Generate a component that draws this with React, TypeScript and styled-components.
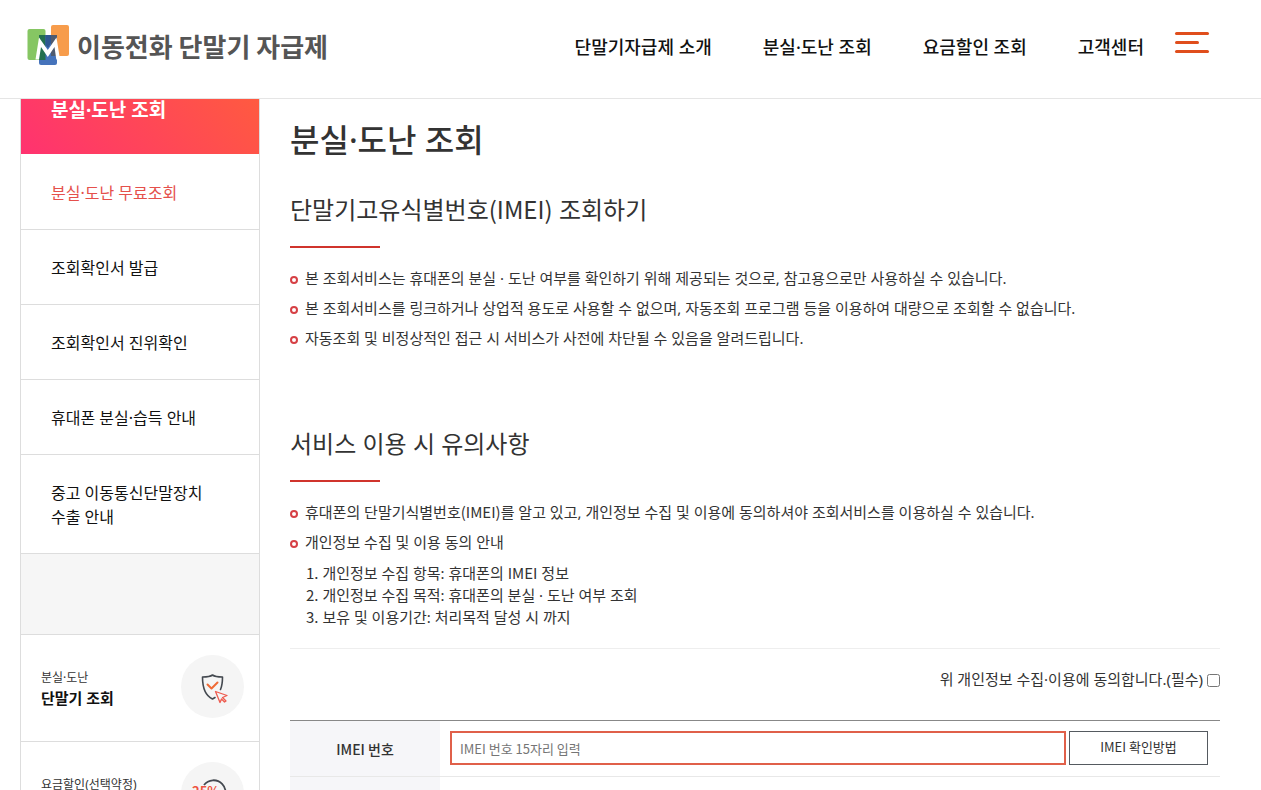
import React from "react";
import styled, { createGlobalStyle } from "styled-components";

const cjk = `"Noto Sans CJK KR", "Noto Sans", sans-serif`;

const GlobalStyle = createGlobalStyle`
  *, *::before, *::after { box-sizing: border-box; }
  body {
    margin: 0;
    background: #fff;
    color: #333;
    font-family: "Noto Sans", "Noto Sans CJK KR", sans-serif;
    font-size: 15px;
    line-height: 24px;
  }
  h1, h2, p, ul, ol { margin: 0; padding: 0; }
  ul, ol { list-style: none; }
  a { color: inherit; text-decoration: none; }
  button, input { font: inherit; }
`;

const Page = styled.div`
  display: flex;
  flex-direction: column;
  height: 100vh;
  overflow: hidden;
`;

const Latin = styled.span`
  font-family: ${cjk};
  line-height: 1;
`;

const Header = styled.header`
  display: flex;
  align-items: center;
  flex: none;
  height: 99px;
  padding: 0 52px 6px 27px;
  border-bottom: 1px solid #e5e5e5;
`;

const Logo = styled.a`
  display: flex;
  align-items: center;
  gap: 7px;
  color: #555;
  font-family: ${cjk};
  font-size: 26px;
  font-weight: 700;
  line-height: 40px;
  white-space: nowrap;
  svg { display: block; flex: none; }
`;

const Nav = styled.nav`
  display: flex;
  gap: 51px;
  margin-left: auto;
  padding-top: 2px;
  color: #111;
  font-size: 18px;
  font-weight: 500;
  white-space: nowrap;
`;

const MenuButton = styled.button`
  display: flex;
  flex-direction: column;
  gap: 6px;
  width: 34px;
  margin: 0 0 8px 31px;
  padding: 0;
  border: 0;
  background: none;
`;

const MenuBar = styled.span<{ $short?: boolean }>`
  width: ${(p) => (p.$short ? "24px" : "34px")};
  height: 3px;
  border-radius: 2px;
  background: #e04e1c;
`;

const Body = styled.div`
  display: flex;
  gap: 30px;
  flex: 1;
  min-height: 0;
  padding: 0 41px 0 20px;
`;

const Sidebar = styled.aside`
  flex: none;
  width: 240px;
  border: 1px solid #ddd;
  border-width: 0 1px;
`;

const SideTitle = styled.p`
  height: 55px;
  margin-bottom: 1px;
  padding: 0 30px;
  background: linear-gradient(50deg, #ff3270, #ff5a40);
  color: #fff;
  font-size: 19px;
  font-weight: 700;
  line-height: 22px;
`;

const SideLink = styled.a<{ $active?: boolean }>`
  display: block;
  padding: 26px 30px 24px;
  border-bottom: 1px solid #ddd;
  color: ${(p) => (p.$active ? "#e5504b" : "#111")};
  font-size: 16px;
`;

const SideGap = styled.div`
  height: 81px;
  border-bottom: 1px solid #ddd;
  background: #f6f6f6;
`;

const QuickLink = styled.a`
  display: flex;
  align-items: center;
  justify-content: space-between;
  height: 107px;
  padding: 0 15px 4px 20px;
  border-bottom: 1px solid #ddd;
  color: #333;
  font-size: 12px;
  line-height: 20px;
  span { padding-top: 3px; }
  strong { display: block; color: #111; font-size: 15px; font-weight: 700; }
  svg { display: block; flex: none; }
`;

const Main = styled.main`
  flex: 1;
  min-width: 0;
`;

const Title = styled.h1`
  padding: 17px 0 28px;
  color: #333;
  font-size: 32px;
  font-weight: 500;
  line-height: 48px;
`;

const Section = styled.section`
  padding-bottom: 73px;
  &:last-of-type { padding-bottom: 20px; }
`;

const SectionTitle = styled.h2`
  margin-bottom: 15px;
  font-size: 24px;
  font-weight: 400;
  line-height: 36px;
  &::after {
    content: "";
    display: block;
    width: 90px;
    height: 2px;
    margin-top: 18px;
    background: #d0342c;
  }
`;

const Bullet = styled.li`
  position: relative;
  padding-left: 15px;
  line-height: 30px;
  &::before {
    content: "";
    position: absolute;
    left: 0;
    top: 13px;
    width: 8px;
    height: 8px;
    border: 2px solid #d64045;
    border-radius: 50%;
  }
`;

const Terms = styled.ol`
  padding: 5px 0 0 16px;
  line-height: 22px;
`;

const Agree = styled.label`
  display: flex;
  align-items: center;
  justify-content: flex-end;
  gap: 4px;
  height: 72px;
  padding-bottom: 11px;
  border-top: 1px solid #eee;
  input { width: 13px; height: 13px; margin: 3px 0 0; }
`;

const FormTable = styled.table`
  width: 100%;
  border-collapse: separate;
  border-spacing: 0;
  border-top: 1px solid #888;
  th, td { height: 56px; border-bottom: 1px solid #e8e8e8; }
  th {
    width: 150px;
    padding: 0;
    background: #f6f6f9;
    font-family: ${cjk};
    font-size: 14px;
    font-weight: 500;
  }
  td { padding: 10px 12px 11px 10px; }
`;

const FieldRow = styled.div`
  display: flex;
  gap: 3px;
`;

const TextInput = styled.input`
  flex: 1;
  min-width: 0;
  height: 34px;
  padding: 0 8px;
  border: 2px solid #e0604a;
  border-radius: 0;
  background: #fff;
  font-family: ${cjk};
  font-size: 13px;
  &::placeholder { color: #757575; }
`;

const LineButton = styled.button`
  width: 139px;
  height: 34px;
  padding: 0 0 2px;
  border: 1px solid #555a60;
  background: #fff;
  color: #333;
  font-family: ${cjk};
  font-size: 13px;
`;

const sideLinks: React.ReactNode[] = [
  "분실·도난 무료조회",
  "조회확인서 발급",
  "조회확인서 진위확인",
  "휴대폰 분실·습득 안내",
  <>중고 이동통신단말장치<br />수출 안내</>,
];

const LogoMark = () => (
  <svg width="43" height="42" viewBox="0 0 43 42" aria-hidden="true">
    <rect x="0.5" y="4" width="18" height="31" rx="2" fill="#86c663" />
    <rect x="24" y="0" width="18" height="31" rx="2" fill="#f79c4b" />
    <path d="M12 10h18v28a2 2 0 0 1-2 2H14a2 2 0 0 1-2-2z" fill="#4573bb" />
    <path d="M12 10h6.500v25H12z" fill="#23704f" />
    <path d="M18.500 10H24v8L21 23L18.500 20z" fill="#2f5791" />
    <path d="M24 10h6v21h-6z" fill="#4f5b70" />
    <path d="M8.500 34.500L12 12.500L20.800 25L29.500 12.500L33 34.500H29.300L27.500 22L20.800 32L14 22L12 34.500z" fill="#fff" />
  </svg>
);

const ShieldIcon = () => (
  <svg width="63" height="63" viewBox="0 0 63 63" aria-hidden="true">
    <circle cx="31.500" cy="31.500" r="31.500" fill="#f5f5f5" />
    <g fill="none" strokeWidth="1.600" strokeLinejoin="round" strokeLinecap="round">
      <path d="M39.500 34.500C41 31 41.500 27 41.500 22C37 22 33.500 21.500 31.500 20C29.500 21.500 26 22 21.500 22C21.500 33 24 40.500 31.500 44L34 42.500" stroke="#444950" />
      <path d="M26.500 29.500L30.500 33.500L36.500 27.500" stroke="#ef6a35" strokeWidth="2" />
      <path d="M34.500 36.500L46 40.500L41.500 42.500L45 46L43.500 47L40.500 44L39 47.500z" stroke="#ee5b4f" strokeWidth="1.300" />
    </g>
  </svg>
);

const DiscountIcon = () => (
  <svg width="63" height="63" viewBox="0 0 63 63" aria-hidden="true">
    <circle cx="31.500" cy="31.500" r="31.500" fill="#f5f5f5" />
    <path d="M23 23A12 12 0 1 1 22 36" fill="none" stroke="#444950" strokeWidth="1.800" />
    <text x="11" y="34" fill="#ee5340" fontSize="13" fontWeight="700" fontFamily="Noto Sans CJK KR">25%</text>
  </svg>
);

export default function App() {
  return (
    <>
      <GlobalStyle />
      <Page>
        <Header>
          <Logo href="#"><LogoMark />이동전화 단말기 자급제</Logo>
          <Nav>
            <a href="#">단말기자급제 소개</a>
            <a href="#">분실·도난 조회</a>
            <a href="#">요금할인 조회</a>
            <a href="#">고객센터</a>
          </Nav>
          <MenuButton type="button" aria-label="전체메뉴">
            <MenuBar /><MenuBar $short /><MenuBar />
          </MenuButton>
        </Header>
        <Body>
          <Sidebar>
            <SideTitle>분실·도난 조회</SideTitle>
            <nav>
              {sideLinks.map((label, i) => (
                <SideLink key={i} href="#" $active={i === 0}>{label}</SideLink>
              ))}
            </nav>
            <SideGap />
            <QuickLink href="#">
              <span>분실·도난<strong>단말기 조회</strong></span>
              <ShieldIcon />
            </QuickLink>
            <QuickLink href="#">
              <span>요금할인(선택약정)<strong>대상 조회</strong></span>
              <DiscountIcon />
            </QuickLink>
          </Sidebar>
          <Main>
            <Title>분실·도난 조회</Title>
            <Section>
              <SectionTitle>단말기고유식별번호<Latin>(IMEI)</Latin> 조회하기</SectionTitle>
              <ul>
                <Bullet>본 조회서비스는 휴대폰의 분실 · 도난 여부를 확인하기 위해 제공되는 것으로, 참고용으로만 사용하실 수 있습니다.</Bullet>
                <Bullet>본 조회서비스를 링크하거나 상업적 용도로 사용할 수 없으며, 자동조회 프로그램 등을 이용하여 대량으로 조회할 수 없습니다.</Bullet>
                <Bullet>자동조회 및 비정상적인 접근 시 서비스가 사전에 차단될 수 있음을 알려드립니다.</Bullet>
              </ul>
            </Section>
            <Section>
              <SectionTitle>서비스 이용 시 유의사항</SectionTitle>
              <ul>
                <Bullet>휴대폰의 단말기식별번호<Latin>(IMEI)</Latin>를 알고 있고, 개인정보 수집 및 이용에 동의하셔야 조회서비스를 이용하실 수 있습니다.</Bullet>
                <Bullet>개인정보 수집 및 이용 동의 안내</Bullet>
              </ul>
              <Terms>
                <li><Latin>1.</Latin> 개인정보 수집 항목: 휴대폰의 <Latin>IMEI</Latin> 정보</li>
                <li><Latin>2.</Latin> 개인정보 수집 목적: 휴대폰의 분실 · 도난 여부 조회</li>
                <li><Latin>3.</Latin> 보유 및 이용기간: 처리목적 달성 시 까지</li>
              </Terms>
            </Section>
            <Agree>
              위 개인정보 수집·이용에 동의합니다.(필수)
              <input type="checkbox" />
            </Agree>
            <FormTable>
              <tbody>
                <tr>
                  <th scope="row"><label htmlFor="imei">IMEI 번호</label></th>
                  <td>
                    <FieldRow>
                      <TextInput id="imei" type="text" placeholder="IMEI 번호 15자리 입력" />
                      <LineButton type="button">IMEI 확인방법</LineButton>
                    </FieldRow>
                  </td>
                </tr>
                <tr><th /><td /></tr>
              </tbody>
            </FormTable>
          </Main>
        </Body>
      </Page>
    </>
  );
}
